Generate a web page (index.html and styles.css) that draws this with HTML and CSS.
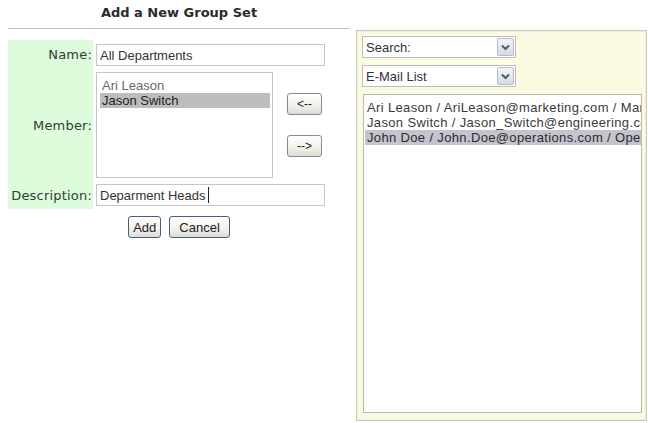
FILE: index.html
```html
<!DOCTYPE html>
<html lang="en">

<head>
  <meta charset="UTF-8" />
  <meta name="viewport" content="width=device-width, initial-scale=1.0" />
  <title>Add a New Group Set</title>
  <link rel="stylesheet" href="styles.css">
</head>

<body>
  <div class="page">
    <div class="group-form">
      <h1 class="title">Add a New Group Set</h1>

      <div class="form-grid">
        <label class="form-label first" for="groupName">Name:</label>
        <div class="form-field first">
          <input id="groupName" class="text-input" type="text" value="All Departments" />
        </div>

        <div class="form-label">Member:</div>
        <div class="form-field member-row">
          <div class="listbox member-list">
            <div class="list-item dim">Ari Leason</div>
            <div class="list-item selected">Jason Switch</div>
          </div>
          <div class="move-buttons">
            <button class="btn btn-move">&lt;--</button>
            <button class="btn btn-move">--&gt;</button>
          </div>
        </div>

        <div class="form-label">Description:</div>
        <div class="form-field">
          <div class="text-input">Deparment Heads<span class="caret"></span></div>
        </div>
      </div>

      <div class="form-actions">
        <button class="btn">Add</button>
        <button class="btn btn-wide">Cancel</button>
      </div>
    </div>

    <div class="picker">
      <div class="combo">
        <span>Search:</span>
        <span class="combo-arrow">
          <svg width="15" height="15" viewBox="0 0 15 15">
            <polyline points="4,5.5 7.5,9 11,5.5" fill="none" stroke="#4a5a78" stroke-width="2" />
          </svg>
        </span>
      </div>
      <div class="combo">
        <span>E-Mail List</span>
        <span class="combo-arrow">
          <svg width="15" height="15" viewBox="0 0 15 15">
            <polyline points="4,5.5 7.5,9 11,5.5" fill="none" stroke="#4a5a78" stroke-width="2" />
          </svg>
        </span>
      </div>
      <div class="listbox address-list">
        <div class="list-item">Ari Leason / AriLeason@marketing.com / Marketing</div>
        <div class="list-item">Jason Switch / Jason_Switch@engineering.com / Engineering</div>
        <div class="list-item selected">John Doe / John.Doe@operations.com / Operations</div>
      </div>
    </div>
  </div>
</body>

</html>
```

FILE: styles.css
```css
body {
  margin: 0;
  background: #fff;
  color: #333;
  font-family: "Liberation Sans", Arial, sans-serif;
  font-size: 13px;
}

.page {
  display: flex;
  align-items: flex-start;
  gap: 6px;
  padding-left: 8px;
}

/* left column: the form */
.group-form {
  width: 342px;
}

.title {
  margin: 0;
  height: 28px;
  border-bottom: 1px solid #c4c4c4;
  text-align: center;
  font: bold 13px "DejaVu Sans", Verdana, sans-serif;
  line-height: 26px;
  color: #2b2b2b;
}

.form-grid {
  display: grid;
  grid-template-columns: 85px 1fr;
  column-gap: 3px;
  margin-top: 11px;
}

.form-label {
  display: flex;
  align-items: center;
  justify-content: flex-end;
  padding-right: 1px;
  background: #dcfcdc;
  font: 13px "DejaVu Sans", Verdana, sans-serif;
  letter-spacing: 0.2px;
  color: #2f3f30;
}

.form-field {
  padding: 3px 0;
}

.form-field.first {
  padding-top: 4px;
}

.text-input {
  display: flex;
  align-items: center;
  box-sizing: border-box;
  width: 229px;
  height: 22px;
  margin: 0;
  padding: 0 3px;
  border: 1px solid #c6c6c6;
  background: #fff;
  font: 13px "Liberation Sans", Arial, sans-serif;
  color: #333;
  outline: none;
}

.caret {
  display: inline-block;
  width: 1px;
  height: 16px;
  margin-left: 2px;
  background: #222;
}

.member-row {
  display: flex;
  align-items: center;
  gap: 14px;
}

.listbox {
  box-sizing: border-box;
  border: 1px solid #c6c6c6;
  background: #fff;
  overflow: hidden;
}

.member-list {
  width: 177px;
  height: 106px;
  padding: 5px 2px 0 3px;
}

.list-item {
  padding-left: 2px;
  line-height: 15px;
  white-space: nowrap;
  overflow: hidden;
  color: #3a3a3a;
}

.list-item.dim {
  color: #666;
}

.member-list .selected {
  background: #bdbdbd;
  color: #222;
}

.move-buttons {
  display: flex;
  flex-direction: column;
  gap: 20px;
}

.btn {
  height: 22px;
  padding: 0 4px;
  border: 1px solid #44607f;
  border-radius: 3px;
  background: linear-gradient(#ffffff, #f1f0ea 60%, #dedcd2);
  font: 13px "Liberation Sans", Arial, sans-serif;
  color: #222;
}

.btn-wide {
  padding: 0 9px;
}

.btn-move {
  width: 35px;
  padding: 0;
  border-color: #7d8ca0;
  font-size: 12px;
}

.form-actions {
  display: flex;
  justify-content: center;
  gap: 8px;
  margin-top: 7px;
}

/* right column: address picker */
.picker {
  display: flex;
  flex-direction: column;
  gap: 7px;
  box-sizing: border-box;
  width: 291px;
  height: 391px;
  margin-top: 30px;
  padding: 5px 4px 7px 5px;
  border: 1px solid #cacab8;
  box-shadow: inset 0 0 0 1px #efefdc;
  background: #fbfbe4;
}

.combo {
  display: flex;
  align-items: center;
  justify-content: space-between;
  box-sizing: border-box;
  width: 154px;
  height: 22px;
  padding-left: 3px;
  border: 1px solid #bdbdbd;
  background: #fff;
  color: #333;
}

.combo-arrow {
  display: flex;
  align-items: center;
  justify-content: center;
  width: 17px;
  height: 18px;
  margin-right: 1px;
  box-sizing: border-box;
  border: 1px solid #b8bcc6;
  border-radius: 2px;
  background: linear-gradient(#f4f5f8, #d6dae3);
}

.address-list {
  flex: 1;
  margin-left: 1px;
  padding: 5px 0 0 1px;
  border-color: #b9b9ad;
}

.address-list .list-item {
  letter-spacing: 0.35px;
}

.address-list .selected {
  background: #c4c4cc;
  color: #2a2a33;
}
```
